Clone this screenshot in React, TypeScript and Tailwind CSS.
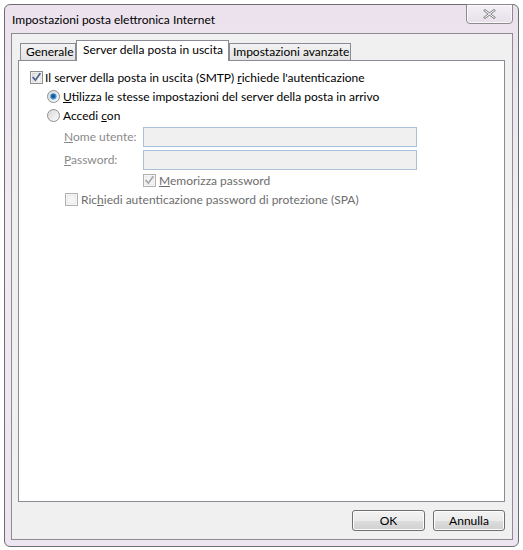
import React from "react";

const FONT = "font-['Lato','Noto_Sans',sans-serif]";

function CheckBox({ checked, disabled }: { checked?: boolean; disabled?: boolean }) {
  const border = disabled ? "#b1b1b1" : "#8e8f8f";
  const tick = disabled ? "#a8a8a8" : "#4a5f8f";
  return (
    <svg width="13" height="13" viewBox="0 0 13 13" className="shrink-0">
      <defs>
        <linearGradient id={disabled ? "cbd" : "cb"} x1="0" y1="0" x2="1" y2="1">
          <stop offset="0" stopColor={disabled ? "#f4f4f4" : "#dcdcdc"} />
          <stop offset="1" stopColor={disabled ? "#f4f4f4" : "#fdfdfd"} />
        </linearGradient>
      </defs>
      <rect x="0.5" y="0.5" width="12" height="12" fill="#fff" stroke={border} />
      <rect x="2" y="2" width="9" height="9" fill={`url(#${disabled ? "cbd" : "cb"})`} stroke={disabled ? "#dadada" : "#c6c6c6"} strokeWidth="0.6" />
      {checked && (
        <path d="M3.2 6.6 L5.4 9.2 L9.8 2.9" fill="none" stroke={tick} strokeWidth="1.7" strokeLinecap="square" />
      )}
    </svg>
  );
}

function Radio({ checked }: { checked?: boolean }) {
  return (
    <svg width="13" height="13" viewBox="0 0 13 13" className="shrink-0">
      <defs>
        <linearGradient id="rb" x1="0" y1="0" x2="1" y2="1">
          <stop offset="0" stopColor="#d6d6d6" />
          <stop offset="1" stopColor="#ffffff" />
        </linearGradient>
        <radialGradient id="rdot" cx="0.45" cy="0.45" r="0.6">
          <stop offset="0" stopColor="#0f3f7c" />
          <stop offset="0.55" stopColor="#2e78c2" />
          <stop offset="1" stopColor="#9bd4f6" />
        </radialGradient>
      </defs>
      <circle cx="6.5" cy="6.5" r="6" fill="url(#rb)" stroke="#8e8f8f" />
      {checked && <circle cx="6.5" cy="6.5" r="3.3" fill="url(#rdot)" />}
    </svg>
  );
}

function Tab({ label, active, w, pad }: { label: string; active?: boolean; w: string; pad: string }) {
  if (active) {
    return (
      <div className={`relative z-10 -mb-px flex h-[21px] items-center whitespace-nowrap bg-white border-x border-t border-[#898c95] pb-[2px] ${pad} ${w}`}>
        {label}
      </div>
    );
  }
  return (
    <div className={`flex h-[17px] items-center whitespace-nowrap border-x border-t border-[#898c95] bg-gradient-to-b from-[#f3f3f3] to-[#e3e3e3] ${pad} ${w}`}>
      {label}
    </div>
  );
}

function Btn({ label, w }: { label: string; w: string }) {
  return (
    <button
      className={`flex h-[21px] items-center justify-center rounded-[3px] border border-[#707070] bg-[linear-gradient(#f2f2f2_0%,#ebebeb_50%,#dddddd_51%,#cfcfcf_100%)] shadow-[inset_0_0_0_1px_#fcfcfc] ${w}`}
    >
      {label}
    </button>
  );
}

export default function App() {
  return (
    <div className={`h-[550px] w-[523px] bg-white pl-[4px] pt-[4px] text-[12px] leading-none text-black ${FONT}`}>
      <div className="flex h-[543px] w-[515px] flex-col rounded-[6px] border border-[#6d6d6d] bg-[linear-gradient(180deg,#ebe2ee_0%,#f1ebf3_40%,#ede5f1_100%)]">
        {/* title bar */}
        <div className="flex h-[28px] shrink-0 items-start justify-between pl-[7px] pr-[5px]">
          <span className="pt-[9px]">Impostazioni posta elettronica Internet</span>
          <div className="-mt-px flex h-[20px] w-[47px] items-center justify-center rounded-b-[4px] border border-[#8b8b8b] bg-gradient-to-b from-[#f4f0f5] to-[#e6dfe9] shadow-[inset_0_0_0_1px_#fbf8fc]">
            <svg width="13" height="10" viewBox="0 0 13 10">
              <path d="M2 1.5 L11 8.5 M11 1.5 L2 8.5" stroke="#8a8a8a" strokeWidth="2.6" strokeLinecap="square" />
              <path d="M2 1.5 L11 8.5 M11 1.5 L2 8.5" stroke="#ffffff" strokeWidth="1" strokeLinecap="square" />
            </svg>
          </div>
        </div>

        {/* client area */}
        <div className="ml-[6px] mr-[5px] flex h-[507px] flex-col border border-[#8d8d8d] bg-[#f0f0f0] pl-[6px] pr-[7px] pt-[6px]">
          <div className="flex h-[20px] items-end pl-[2px]">
            <Tab label="Generale" w="w-[56px]" pad="pl-[5px]" />
            <Tab label="Server della posta in uscita" active w="w-[153px]" pad="pl-[6px]" />
            <Tab label="Impostazioni avanzate" w="w-[122px]" pad="pl-[3px]" />
          </div>

          <div className="flex h-[442px] flex-col border border-[#898c95] bg-white pl-[11px] pt-[7px]">
            <div className="flex h-[19px] items-center gap-[2px]">
              <CheckBox checked />
              <span>
                Il server della posta in uscita (SMTP) <u>r</u>ichiede l'autenticazione
              </span>
            </div>
            <div className="flex h-[19px] items-center gap-[3px] pl-[17px]">
              <Radio checked />
              <span>
                <u>U</u>tilizza le stesse impostazioni del server della posta in arrivo
              </span>
            </div>
            <div className="flex h-[19px] items-center gap-[3px] pl-[17px]">
              <Radio />
              <span>
                Accedi <u>c</u>on
              </span>
            </div>

            <div className="mt-[2px] flex flex-col gap-[3px] pl-[34px]">
              <div className="flex h-[20px] items-center">
                <span className="w-[79px] text-[#8a8a8a]">
                  <u>N</u>ome utente:
                </span>
                <div className="h-[20px] w-[274px] border border-[#abc0d9] bg-[#f0f0f0]" />
              </div>
              <div className="flex h-[20px] items-center">
                <span className="w-[79px] text-[#8a8a8a]">
                  <u>P</u>assword:
                </span>
                <div className="h-[20px] w-[274px] border border-[#abc0d9] bg-[#f0f0f0]" />
              </div>
            </div>

            <div className="mt-[1px] flex h-[19px] items-center gap-[3px] pl-[113px]">
              <CheckBox checked disabled />
              <span className="text-[#6d6d6d]">
                <u>M</u>emorizza password
              </span>
            </div>
            <div className="flex h-[19px] items-center gap-[3px] pl-[35px]">
              <CheckBox disabled />
              <span className="text-[#6d6d6d]">
                Ric<u>h</u>iedi autenticazione password di protezione (SPA)
              </span>
            </div>
          </div>

          <div className="mt-[8px] flex justify-end gap-[8px]">
            <Btn label="OK" w="w-[73px]" />
            <Btn label="Annulla" w="w-[72px]" />
          </div>
        </div>
      </div>
    </div>
  );
}
